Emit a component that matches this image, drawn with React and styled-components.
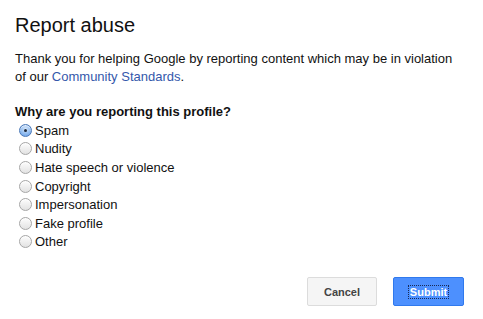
import React, { useState } from "react";
import styled, { createGlobalStyle } from "styled-components";

const options = [
  "Spam",
  "Nudity",
  "Hate speech or violence",
  "Copyright",
  "Impersonation",
  "Fake profile",
  "Other",
];

const App = () => {
  const [choice, setChoice] = useState("Spam");

  return (
    <>
      <GlobalStyle />
      <Dialog>
        <Title>Report abuse</Title>
        <Intro>
          Thank you for helping Google by reporting content which may be in violation
          of our <Link href="#">Community Standards</Link>.
        </Intro>
        <Question>Why are you reporting this profile?</Question>
        <OptionList>
          {options.map((opt) => (
            <Option key={opt}>
              <Radio
                type="radio"
                name="reason"
                checked={choice === opt}
                onChange={() => setChoice(opt)}
              />
              {opt}
            </Option>
          ))}
        </OptionList>
        <Actions>
          <Button>Cancel</Button>
          <Button primary>
            <FocusLabel>Submit</FocusLabel>
          </Button>
        </Actions>
      </Dialog>
    </>
  );
};

const GlobalStyle = createGlobalStyle`
  html, body {
    margin: 0;
    background: #ffffff;
  }
  body {
    font-family: Arial, "Liberation Sans", sans-serif;
    color: #111;
  }
`;

const Dialog = styled.div`
  width: 483px;
  height: 319px;
  box-sizing: border-box;
  padding: 14px 19px 0 15px;
  display: flex;
  flex-direction: column;
`;

const Title = styled.h1`
  margin: 0;
  font-size: 20px;
  font-weight: normal;
  line-height: 23px;
  color: #111;
`;

const Intro = styled.p`
  margin: 13px 0 0;
  font-size: 13px;
  line-height: 18px;
  width: 445px;
`;

const Link = styled.a`
  color: #3458ab;
  text-decoration: none;
`;

const Question = styled.div`
  margin-top: 17px;
  font-size: 13px;
  font-weight: bold;
  line-height: 18px;
`;

const OptionList = styled.div`
  display: flex;
  flex-direction: column;
`;

const Option = styled.label`
  display: flex;
  align-items: center;
  height: 18.6px;
  font-size: 13px;
  gap: 3px;
  padding-left: 4px;
`;

const Radio = styled.input`
  appearance: none;
  margin: 0;
  width: 13px;
  height: 13px;
  border-radius: 50%;
  border: 1px solid #a6a6a6;
  box-sizing: border-box;
  background: linear-gradient(#fdfdfd, #e2e2e2);
  box-shadow: inset 0 1px 1px rgba(255, 255, 255, 0.8);
  position: relative;
  flex-shrink: 0;

  &:checked {
    border-color: #4a78b8;
    background: radial-gradient(circle at 50% 35%, #d4e6fb, #7fb0ec 70%, #5f95dc);
  }

  &:checked::after {
    content: "";
    position: absolute;
    left: 4px;
    top: 4px;
    width: 3px;
    height: 3px;
    border-radius: 50%;
    background: #1d2a3a;
  }
`;

const Actions = styled.div`
  display: flex;
  justify-content: flex-end;
  gap: 16px;
  margin-top: 26px;
`;

const Button = styled.button`
  height: 29px;
  padding: 0 8px;
  box-sizing: border-box;
  border-radius: 2px;
  font-family: Arial, "Liberation Sans", sans-serif;
  font-size: 11px;
  font-weight: bold;
  display: flex;
  align-items: center;
  justify-content: center;
  border: 1px solid ${(p) => (p.primary ? "#3079ed" : "#dcdcdc")};
  background: ${(p) => (p.primary ? "#4d90fe" : "#f5f5f5")};
  color: ${(p) => (p.primary ? "#ffffff" : "#444444")};
  width: ${(p) => (p.primary ? "71px" : "70px")};
`;

const FocusLabel = styled.span`
  outline: 1px dotted #1a2a55;
  outline-offset: 1px;
  line-height: 10px;
`;

export default App;
